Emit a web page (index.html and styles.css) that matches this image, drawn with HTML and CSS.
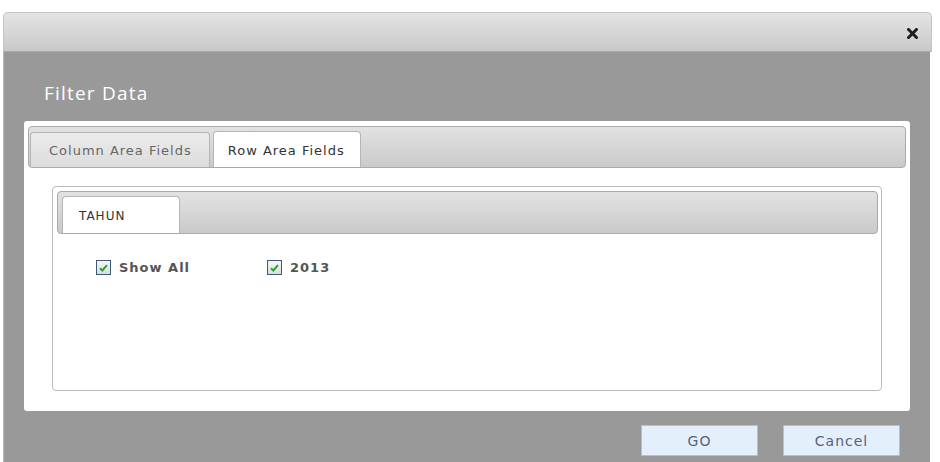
FILE: index.html
```html
<!DOCTYPE html>
<html>
<head>
<meta charset="utf-8">
<title>Filter Data</title>
<link rel="stylesheet" href="styles.css">
</head>
<body>
<div class="dialog">
  <div class="dialog-head">
    <svg class="close" width="11" height="11" viewBox="0 0 11 11"><path d="M1.5 1.5 L9.5 9.5 M9.5 1.5 L1.5 9.5" stroke="#1e1e1e" stroke-width="3" stroke-linecap="square"/></svg>
  </div>
  <div class="dialog-body">
    <h2 class="title">Filter Data</h2>
    <div class="panel">
      <div class="tabbar">
        <div class="tab">Column Area Fields</div>
        <div class="tab active">Row Area Fields</div>
      </div>
      <div class="inner">
        <div class="tabbar small">
          <div class="tab active">TAHUN</div>
        </div>
        <div class="checks">
          <label class="check">
            <span class="box"><svg width="9" height="8" viewBox="0 0 9 8"><path d="M1 4.2 L3.4 6.5 L8 1.2" fill="none" stroke="#2aa13a" stroke-width="2"/></svg></span>
            Show All
          </label>
          <label class="check">
            <span class="box"><svg width="9" height="8" viewBox="0 0 9 8"><path d="M1 4.2 L3.4 6.5 L8 1.2" fill="none" stroke="#2aa13a" stroke-width="2"/></svg></span>
            2013
          </label>
        </div>
      </div>
    </div>
    <div class="actions">
      <button class="btn">GO</button>
      <button class="btn">Cancel</button>
    </div>
  </div>
</div>
</body>
</html>
```
FILE: styles.css
```css
html, body {
  margin: 0;
  padding: 0;
  background: #fff;
  width: 940px;
  height: 462px;
  overflow: hidden;
}

.dialog {
  margin: 12px 0 0 3px;
  width: 927px;
  height: 450px;
  display: flex;
  flex-direction: column;
}

.dialog-head {
  height: 38px;
  border: 1px solid #c4c4c4;
  border-bottom: 1px solid #aaa;
  border-radius: 5px 5px 0 0;
  background: linear-gradient(#e4e4e4, #c9c9c9);
  display: flex;
  align-items: center;
  justify-content: flex-end;
  padding-right: 13px;
  margin-right: -2px;
}

.close {
  margin-top: 3px;
}

.dialog-body {
  flex: 1;
  background: #999;
  padding: 0 20px 0 20px;
  border-left: 1px solid #bbb;
}

.title {
  margin: 0;
  padding: 28px 0 0 20px;
  height: 41px;
  font-family: "Open Sans", sans-serif;
  font-weight: normal;
  font-size: 19px;
  letter-spacing: 1.2px;
  color: #fff;
}

.panel {
  box-sizing: border-box;
  background: #fff;
  border-radius: 3px;
  height: 290px;
  padding: 5px 4px 0 4px;
}

.tabbar {
  height: 40px;
  border: 1px solid #aaa;
  border-radius: 4px;
  background: linear-gradient(#e2e2e2, #cacaca);
  display: flex;
  align-items: flex-end;
  gap: 3px;
  padding-left: 1px;
}

.tab {
  font-family: "DejaVu Sans", Verdana, sans-serif;
  font-size: 13px;
  letter-spacing: 1px;
  color: #666;
  height: 35px;
  box-sizing: border-box;
  padding: 10px 17px 0 18px;
  border: 1px solid #b5b5b5;
  border-bottom: none;
  border-radius: 4px 4px 0 0;
  background: linear-gradient(#ececec, #dcdcdc);
}

.tab.active {
  background: #fff;
  color: #333;
  height: 36px;
  padding-top: 11px;
  padding-left: 14px;
  padding-right: 15px;
}

.inner {
  margin: 18px 24px 0 24px;
  height: 199px;
  border: 1px solid #bbb;
  border-radius: 4px;
  padding: 4px 3px 0 4px;
}

.tabbar.small {
  height: 41px;
  padding-left: 4px;
}

.tabbar.small .tab.active {
  height: 37px;
  padding: 12px 0 0 16px;
  width: 118px;
  font-size: 12px;
  letter-spacing: 1px;
  color: #333;
}

.checks {
  display: flex;
  padding: 26px 0 0 39px;
}

.check {
  display: flex;
  align-items: center;
  font-family: "DejaVu Sans", Verdana, sans-serif;
  font-weight: bold;
  font-size: 13px;
  letter-spacing: 1px;
  color: #555;
  width: 171px;
}

.box {
  width: 15px;
  height: 15px;
  box-sizing: border-box;
  border: 1px solid #3c5a78;
  background: linear-gradient(#f6f6f6, #dcdcdc);
  display: inline-flex;
  align-items: center;
  justify-content: center;
  margin-right: 8px;
}

.actions {
  display: flex;
  justify-content: flex-end;
  gap: 25px;
  padding: 14px 10px 0 0;
}

.btn {
  width: 117px;
  height: 31px;
  border: 1px solid #9ec6ec;
  background: #e4effc;
  font-family: "DejaVu Sans", Verdana, sans-serif;
  font-size: 14px;
  letter-spacing: 1px;
  color: #59627c;
  padding: 0;
}
```
